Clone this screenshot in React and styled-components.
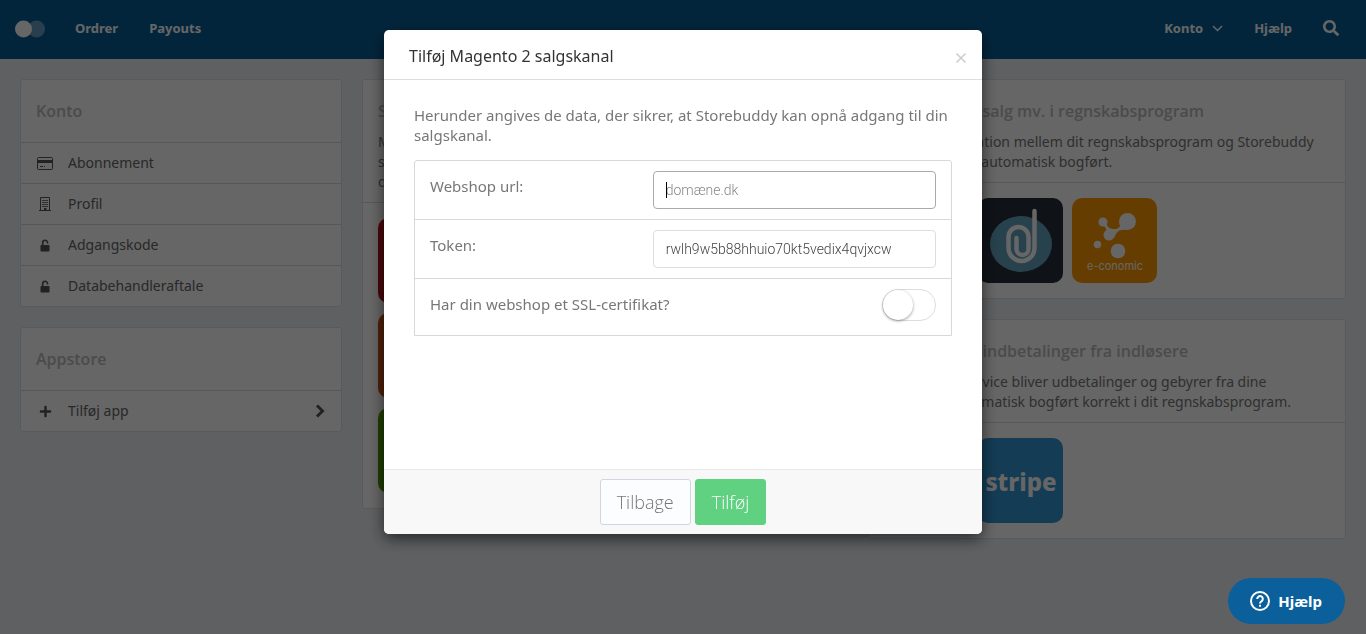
import React, { useState } from 'react';
import styled, { createGlobalStyle } from 'styled-components';
import { FaPlus, FaSearch } from 'react-icons/fa';

const GlobalStyle = createGlobalStyle`
  * {
    box-sizing: border-box;
  }

  body {
    margin: 0;
    background: #ebf0f5;
    color: #555;
    font-family: 'Noto Sans', 'Open Sans', sans-serif;
    font-size: 15px;
    line-height: 20px;
  }
`;

const TopBar = styled.header`
  display: flex;
  align-items: center;
  height: 59px;
  padding: 0 27px 3px 15px;
  background: #085e97;
`;

const Brand = styled.a`
  display: flex;
  margin-right: 30px;
  padding-top: 2px;
`;

const Nav = styled.nav`
  display: flex;
  align-items: center;
  gap: 31px;
  margin-left: ${props => (props.$right ? 'auto' : '0')};
`;

const NavLink = styled.a`
  display: flex;
  align-items: center;
  gap: 9px;
  color: #fff;
  font-size: 13px;
  font-weight: 700;
  text-decoration: none;
`;

const Page = styled.main`
  display: grid;
  grid-template-columns: 322fr 486fr 478fr;
  align-items: start;
  gap: 20px;
  padding: 20px;
`;

const Column = styled.div`
  display: flex;
  flex-direction: column;
  gap: 20px;
  min-width: 0;
`;

const Card = styled.section`
  background: #fff;
  border: 1px solid #dce2e8;
  border-radius: 3px;
`;

const CardHead = styled.div`
  padding: 20px 15px ${props => (props.$compact ? '10px' : '20px')};
`;

const CardTitle = styled.h2`
  margin: 0;
  color: #bbb;
  font-family: 'Open Sans', 'Noto Sans', sans-serif;
  font-size: 16px;
  font-weight: 600;
  line-height: 22px;
`;

const CardText = styled.p`
  margin: 10px 0 0;
  color: #777;
  font-size: 14px;
`;

const TextLine = styled.span`
  display: block;
  white-space: nowrap;
`;

const MenuLink = styled.a`
  display: flex;
  align-items: center;
  height: 41px;
  padding: 0 15px;
  border-top: 1px solid #d5d9dd;
  color: #666;
  font-size: 14px;
  text-decoration: none;
`;

const MenuIcon = styled.span`
  display: flex;
  justify-content: center;
  width: 18px;
  margin-right: 14px;
  color: #555;
`;

const MenuLabel = styled.span`
  flex: 1;
`;

const Tiles = styled.div`
  display: flex;
  flex-direction: ${props => (props.$stacked ? 'column' : 'row')};
  gap: ${props => (props.$stacked ? '10px' : '9px')};
  padding: 15px;
  border-top: 1px solid #d5d9dd;
`;

const Tile = styled.a`
  display: block;
  width: 85px;
  height: 85px;
  border-radius: 10px;
  background: ${props => props.$color};
  overflow: hidden;
`;

const Backdrop = styled.div`
  position: fixed;
  inset: 0;
  z-index: 10;
  padding: 30px 20px;
  background: rgba(0, 0, 0, 0.6);
  overflow: auto;
`;

const Modal = styled.div`
  max-width: 598px;
  margin: 0 auto;
  background: #fff;
  border-radius: 5px;
  box-shadow: 0 5px 15px rgba(0, 0, 0, 0.6);
  overflow: hidden;
`;

const ModalHead = styled.div`
  display: flex;
  align-items: center;
  justify-content: space-between;
  height: 50px;
  padding: 2px 15px 0 25px;
  border-bottom: 1px solid #ddd;
`;

const ModalTitle = styled.h1`
  margin: 0;
  color: #333;
  font-size: 16px;
  font-weight: 400;
`;

const CloseButton = styled.button`
  display: flex;
  padding: 4px 0 0;
  border: 0;
  background: none;
  color: #ccc;
`;

const ModalBody = styled.div`
  min-height: 389px;
  padding: 25px 30px 30px;
  color: #777;
`;

const Intro = styled.p`
  margin: 0 0 15px;
`;

const Fields = styled.div`
  border: 1px solid #d8d8d8;
  border-radius: 3px 3px 0 0;
`;

const Field = styled.div`
  display: flex;
  align-items: flex-start;
  justify-content: space-between;
  min-height: 57px;
  padding: 10px 15px;

  & + & {
    border-top: 1px solid #d8d8d8;
  }
`;

const FieldLabel = styled.label`
  padding-top: 5px;
`;

const InputWrap = styled.div`
  position: relative;
  width: 56%;
`;

const TextInput = styled.input`
  display: block;
  width: 100%;
  height: 38px;
  padding: 0 12px;
  border: 1px solid ${props => (props.$active ? '#aaa' : '#ddd')};
  border-radius: 4px;
  background: #fff;
  color: #444;
  font-family: Roboto, 'Liberation Sans', sans-serif;
  font-size: 14px;
  font-weight: 300;
  outline: none;

  &::placeholder {
    color: #888;
    opacity: 1;
  }
`;

const Caret = styled.span`
  position: absolute;
  top: 11px;
  left: 13px;
  width: 1px;
  height: 16px;
  background: #000;
`;

const Switch = styled.input`
  display: flex;
  appearance: none;
  width: 54px;
  height: 32px;
  margin: 0;
  border: 1px solid #ddd;
  border-radius: 16px;
  background: ${props => (props.checked ? '#5fd180' : '#fff')};

  &::before {
    content: '';
    width: 30px;
    height: 30px;
    margin-left: ${props => (props.checked ? 'auto' : '0')};
    border-radius: 50%;
    background: #fff;
    box-shadow: 0 1px 3px rgba(0, 0, 0, 0.4);
  }
`;

const ModalFoot = styled.div`
  display: flex;
  justify-content: center;
  gap: 4px;
  padding: 9px;
  border-top: 1px solid #e8e8e8;
  background: #f8f8f8;
`;

const Button = styled.button`
  height: 46px;
  padding: 0 16px;
  border: 1px solid ${props => (props.$primary ? '#5fd180' : '#cfd6e2')};
  border-radius: 3px;
  background: ${props => (props.$primary ? '#5fd180' : '#fbfdff')};
  color: ${props => (props.$primary ? '#fff' : '#777')};
  font-family: 'Open Sans', 'Noto Sans', sans-serif;
  font-size: 18px;
  font-weight: 300;
`;

const HelpButton = styled.button`
  position: fixed;
  right: 21px;
  bottom: 10px;
  z-index: 20;
  display: flex;
  align-items: center;
  gap: 7px;
  height: 46px;
  padding: 0 23px 0 21px;
  border: 0;
  border-radius: 23px;
  background: #0b609b;
  color: #fff;
  font-family: inherit;
  font-size: 15px;
  font-weight: 700;
`;

const CardIcon = () => (
  <svg width="16" height="13" viewBox="0 0 16 13" fill="none" stroke="currentColor">
    <rect x="0.5" y="0.5" width="15" height="12" rx="1" />
    <path d="M1 4.5h14" strokeWidth="3" />
    <path d="M3 9.5h3M7 9.5h1" />
  </svg>
);

const BuildingIcon = () => (
  <svg width="12" height="14" viewBox="0 0 12 14" fill="none" stroke="currentColor">
    <path d="M1.500 13V.5h9V13M0 13.500h12" />
    <path d="M3 3.500h6M3 5.500h6M3 7.500h6M3 9.500h6" strokeWidth="0.800" />
    <path d="M5 12h2.500" strokeWidth="2" />
  </svg>
);

const UnlockIcon = () => (
  <svg width="10" height="13" viewBox="0 0 10 13" fill="currentColor">
    <path d="M2.700 6.500V3.700a2.400 2.400 0 0 1 4.800 0V4.500" fill="none" stroke="currentColor" strokeWidth="1.600" />
    <rect x="0.500" y="6" width="9" height="6.500" rx="0.700" />
  </svg>
);

const ChevronRight = () => (
  <svg width="12" height="14" viewBox="0 0 12 14" fill="none" stroke="#555" strokeWidth="3">
    <path d="M3 1.5L8.5 7 3 12.5" />
  </svg>
);

const ChevronDown = () => (
  <svg width="11" height="7" viewBox="0 0 11 7" fill="none" stroke="currentColor" strokeWidth="1.500">
    <path d="M1 1l4.5 4.5L10 1" />
  </svg>
);

const DineroLogo = () => (
  <svg width="85" height="85" viewBox="0 0 85 85" fill="none">
    <ellipse cx="43" cy="46" rx="31" ry="28" fill="#62a3c0" />
    <path
      d="M56.500 13V50a13 13 0 0 1-26 0V39a10 10 0 0 1 20 0V51a6 6 0 0 1-12 0V40"
      stroke="#fff"
      strokeWidth="4.500"
      strokeLinecap="round"
    />
  </svg>
);

const EconomicLogo = () => (
  <svg width="85" height="85" viewBox="0 0 85 85" fill="#fff">
    <circle cx="31" cy="24" r="4.500" />
    <circle cx="55.500" cy="23.500" r="8.500" />
    <circle cx="37" cy="37" r="5.500" />
    <path d="M34 22c1 8 3 9 10 9 4-1 5-4 5-8l6 9c-9-1-10 2-13 8l-8-4c1-5 0-8-5-9z" />
    <circle cx="25.500" cy="46.500" r="3.700" />
    <circle cx="46" cy="53" r="7.300" />
    <text x="43" y="72" textAnchor="middle" fontFamily="Inter, sans-serif" fontSize="11">
      e-conomic
    </text>
  </svg>
);

const StripeLogo = () => (
  <svg width="85" height="85" viewBox="0 0 85 85" fill="#fff">
    <text x="43" y="53" textAnchor="middle" fontFamily="Noto Sans, sans-serif" fontSize="24" fontWeight="800">
      stripe
    </text>
  </svg>
);

const accountLinks = [
  { label: 'Abonnement', icon: <CardIcon /> },
  { label: 'Profil', icon: <BuildingIcon /> },
  { label: 'Adgangskode', icon: <UnlockIcon /> },
  { label: 'Databehandleraftale', icon: <UnlockIcon /> },
];

const channelColors = ['#b8141c', '#c8501a', '#4f9a08'];

const InfoCard = ({ title, lines, stacked, children }) => (
  <Card>
    <CardHead $compact>
      <CardTitle>{title}</CardTitle>
      <CardText>
        {lines.map(line => (
          <TextLine key={line}>{line}</TextLine>
        ))}
      </CardText>
    </CardHead>
    <Tiles $stacked={stacked}>{children}</Tiles>
  </Card>
);

const App = () => {
  const [url, setUrl] = useState('');
  const [token, setToken] = useState('rwlh9w5b88hhuio70kt5vedix4qvjxcw');
  const [ssl, setSsl] = useState(false);

  return (
    <>
      <GlobalStyle />
      <TopBar>
        <Brand href="#" aria-label="Storebuddy">
          <svg width="30" height="18" viewBox="0 0 30 18">
            <circle cx="21.500" cy="9" r="8.500" fill="#fff" opacity="0.4" />
            <circle cx="8.500" cy="9" r="8.500" fill="#fff" />
          </svg>
        </Brand>
        <Nav>
          <NavLink href="#">Ordrer</NavLink>
          <NavLink href="#">Payouts</NavLink>
        </Nav>
        <Nav $right>
          <NavLink href="#">
            Konto <ChevronDown />
          </NavLink>
          <NavLink href="#">Hjælp</NavLink>
          <NavLink href="#" aria-label="Søg">
            <FaSearch size={16} />
          </NavLink>
        </Nav>
      </TopBar>

      <Page>
        <Column>
          <Card>
            <CardHead>
              <CardTitle>Konto</CardTitle>
            </CardHead>
            {accountLinks.map(link => (
              <MenuLink href="#" key={link.label}>
                <MenuIcon>{link.icon}</MenuIcon>
                <MenuLabel>{link.label}</MenuLabel>
              </MenuLink>
            ))}
          </Card>
          <Card>
            <CardHead>
              <CardTitle>Appstore</CardTitle>
            </CardHead>
            <MenuLink href="#">
              <MenuIcon>
                <FaPlus size={13} />
              </MenuIcon>
              <MenuLabel>Tilføj app</MenuLabel>
              <ChevronRight />
            </MenuLink>
          </Card>
        </Column>

        <Column>
          <InfoCard
            title="Salgskanaler"
            lines={['Med Storebuddy kan du forbinde dine', 'salgskanaler, så ordrer og', 'data hentes automatisk.']}
            stacked
          >
            {channelColors.map(color => (
              <Tile href="#" key={color} $color={color} />
            ))}
          </InfoCard>
        </Column>

        <Column>
          <InfoCard
            title="Bogføring af salg mv. i regnskabsprogram"
            lines={['Med en integration mellem dit regnskabsprogram og Storebuddy', 'bliver alle salg automatisk bogført.']}
          >
            <Tile href="#" $color="#3296d4" />
            <Tile href="#" $color="#262e38">
              <DineroLogo />
            </Tile>
            <Tile href="#" $color="#ff9900">
              <EconomicLogo />
            </Tile>
          </InfoCard>
          <InfoCard
            title="Bogføring af indbetalinger fra indløsere"
            lines={['Med denne service bliver udbetalinger og gebyrer fra dine', 'kunderne automatisk bogført korrekt i dit regnskabsprogram.']}
          >
            <Tile href="#" $color="#262e38" />
            <Tile href="#" $color="#3296d4">
              <StripeLogo />
            </Tile>
          </InfoCard>
        </Column>
      </Page>

      <Backdrop>
        <Modal role="dialog" aria-labelledby="modal-title">
          <ModalHead>
            <ModalTitle id="modal-title">Tilføj Magento 2 salgskanal</ModalTitle>
            <CloseButton type="button" aria-label="Luk">
              <svg width="12" height="12" viewBox="0 0 12 12" stroke="currentColor" strokeWidth="1.500">
                <path d="M1.500 1.500l9 9M10.500 1.500l-9 9" />
              </svg>
            </CloseButton>
          </ModalHead>
          <ModalBody>
            <Intro>
              Herunder angives de data, der sikrer, at Storebuddy kan opnå adgang til din salgskanal.
            </Intro>
            <Fields>
              <Field>
                <FieldLabel htmlFor="url">Webshop url:</FieldLabel>
                <InputWrap>
                  <TextInput
                    id="url"
                    placeholder="domæne.dk"
                    value={url}
                    onChange={e => setUrl(e.target.value)}
                    $active
                  />
                  {url === '' && <Caret />}
                </InputWrap>
              </Field>
              <Field>
                <FieldLabel htmlFor="token">Token:</FieldLabel>
                <InputWrap>
                  <TextInput id="token" value={token} onChange={e => setToken(e.target.value)} />
                </InputWrap>
              </Field>
              <Field>
                <FieldLabel htmlFor="ssl">Har din webshop et SSL-certifikat?</FieldLabel>
                <Switch id="ssl" type="checkbox" checked={ssl} onChange={e => setSsl(e.target.checked)} />
              </Field>
            </Fields>
          </ModalBody>
          <ModalFoot>
            <Button type="button">Tilbage</Button>
            <Button type="button" $primary>
              Tilføj
            </Button>
          </ModalFoot>
        </Modal>
      </Backdrop>

      <HelpButton type="button">
        <svg width="22" height="22" viewBox="0 0 22 22" fill="none" stroke="currentColor" strokeWidth="2">
          <circle cx="11" cy="11" r="9" />
          <path d="M8.200 9a2.800 2.800 0 1 1 4.300 2.300c-1 .7-1.500 1.100-1.500 2.200" />
          <path d="M11 14.700v2" />
        </svg>
        Hjælp
      </HelpButton>
    </>
  );
};

export default App;
